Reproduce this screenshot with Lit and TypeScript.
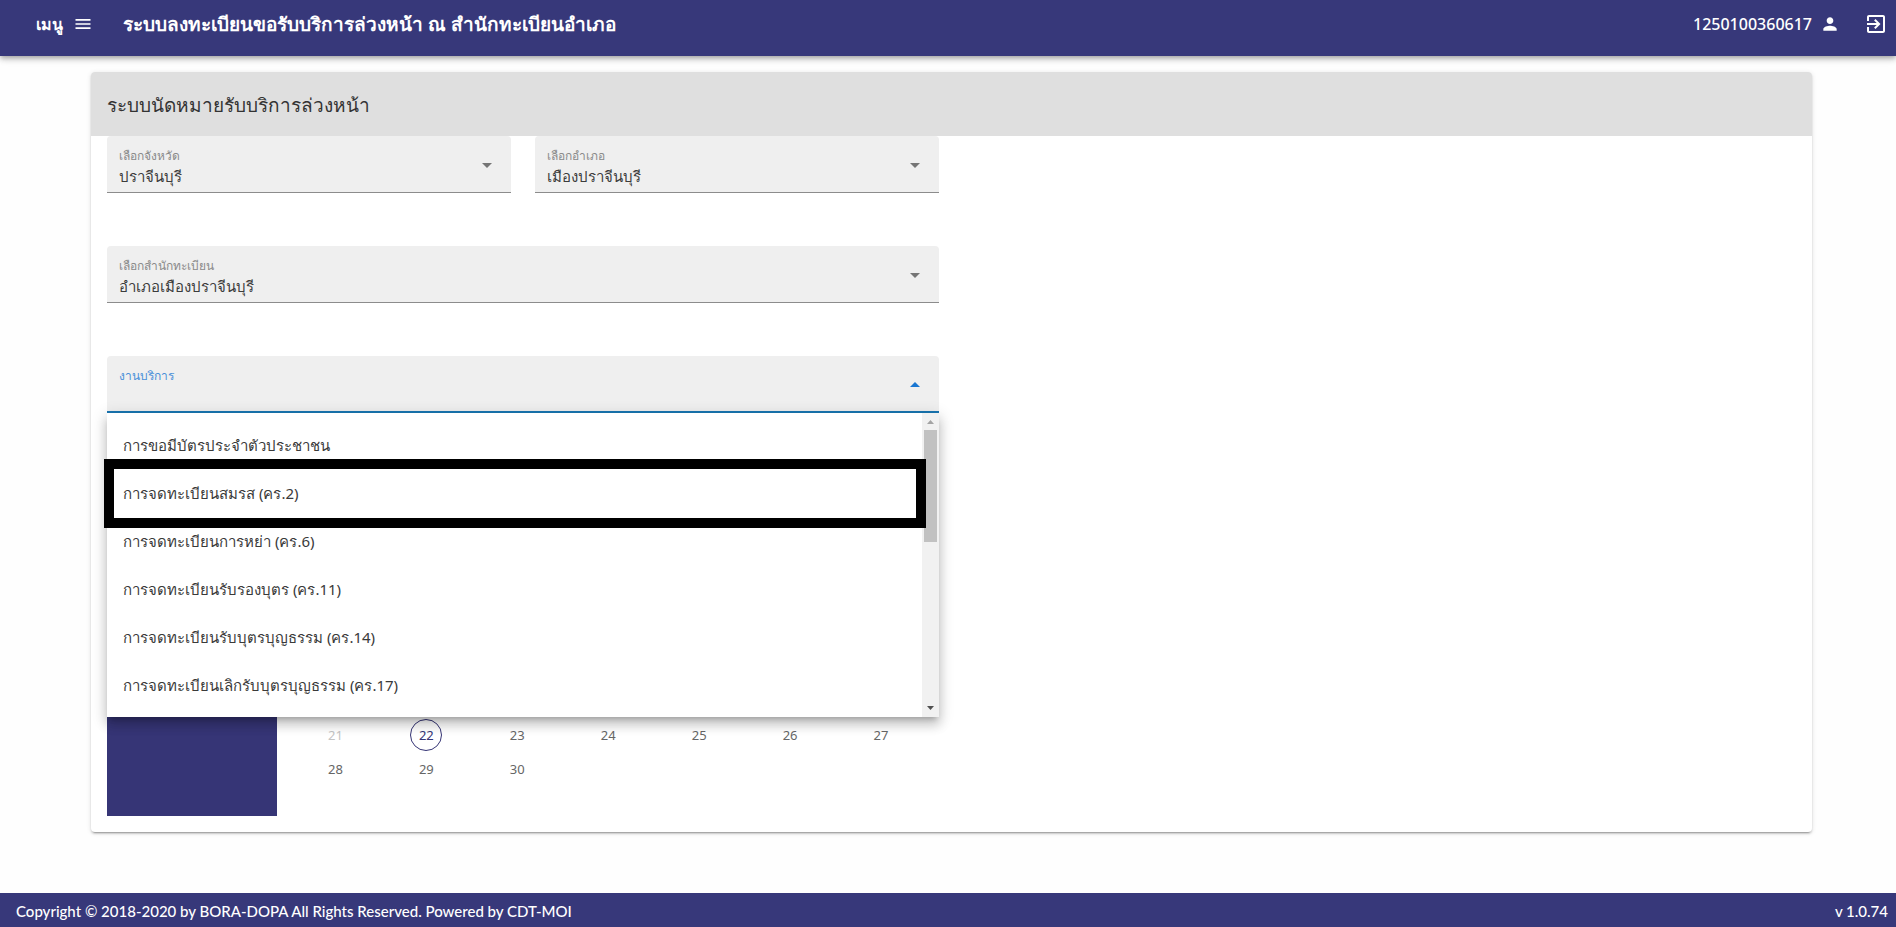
import { LitElement, html, css, svg, nothing } from "lit";
import { customElement, property, state } from "lit/decorators.js";

const SERVICES = [
  "การขอมีบัตรประจำตัวประชาชน",
  "การจดทะเบียนสมรส (คร.2)",
  "การจดทะเบียนการหย่า (คร.6)",
  "การจดทะเบียนรับรองบุตร (คร.11)",
  "การจดทะเบียนรับบุตรบุญธรรม (คร.14)",
  "การจดทะเบียนเลิกรับบุตรบุญธรรม (คร.17)",
];

const WEEKS = [
  [21, 22, 23, 24, 25, 26, 27],
  [28, 29, 30, 0, 0, 0, 0],
];
const TODAY = 22;

const FONT = css`"Noto Sans", "Open Sans", sans-serif`;

const icon = (d: string, size: number) => html`
  <svg width=${size} height=${size} viewBox="0 0 24 24" aria-hidden="true">
    ${svg`<path fill="currentColor" d=${d}></path>`}
  </svg>
`;

@customElement("select-field")
export class SelectField extends LitElement {
  @property() label = "";
  @property() value = "";
  @property({ type: Boolean, reflect: true }) open = false;

  static styles = css`
    :host {
      display: block;
      position: relative;
      font-family: ${FONT};
    }
    .box {
      display: grid;
      height: 57px;
      box-sizing: border-box;
      background: #efefef;
      border-radius: 4px 4px 0 0;
      border-bottom: 1px solid #8c8c8c;
      color: #757575;
    }
    .open {
      border-bottom: 2px solid #1976b2;
      color: #1976d2;
    }
    label,
    select,
    svg {
      grid-area: 1 / 1;
    }
    label {
      padding: 10px 12px 0;
      font-size: 12px;
      line-height: 20px;
      color: #8a8a8a;
      z-index: 1;
      pointer-events: none;
    }
    .open label {
      color: #4a90d9;
    }
    select {
      appearance: none;
      width: 100%;
      height: 100%;
      margin: 0;
      padding: 24px 48px 0 12px;
      border: 0;
      outline: 0;
      background: transparent;
      font: 400 15px/32px ${FONT};
      color: #3c3c3c;
    }
    svg {
      justify-self: end;
      align-self: center;
      margin: 2px 12px 0 0;
      pointer-events: none;
    }
    .open svg {
      transform: rotate(180deg);
    }
  `;

  render() {
    return html`
      <div class="box ${this.open ? "open" : ""}">
        <label for="control">${this.label}</label>
        <select id="control">
          <option>${this.value}</option>
        </select>
        ${icon("M7 10l5 5 5-5z", 24)}
      </div>
      <slot></slot>
    `;
  }
}

@customElement("service-menu")
export class ServiceMenu extends LitElement {
  static styles = css`
    :host {
      position: absolute;
      z-index: 2;
      top: 100%;
      left: 0;
      right: 0;
      display: flex;
      background: #fff;
      box-shadow: 0 5px 5px -3px rgba(0, 0, 0, 0.2), 0 8px 10px 1px rgba(0, 0, 0, 0.14),
        0 3px 14px 2px rgba(0, 0, 0, 0.12);
      font-family: ${FONT};
    }
    .list {
      flex: 1;
      padding: 8px 0;
    }
    .item {
      display: block;
      width: 100%;
      height: 48px;
      padding: 0 16px;
      border: 0;
      background: none;
      text-align: left;
      font: 400 15px/24px ${FONT};
      color: #3a3a3a;
    }
    .bar {
      display: flex;
      flex-direction: column;
      align-items: center;
      width: 17px;
      background: #f1f1f1;
    }
    .arrow {
      width: 17px;
      height: 17px;
      color: #a3a3a3;
    }
    .down {
      color: #505050;
      margin-top: auto;
    }
    .thumb {
      width: 13px;
      height: 112px;
      background: #c1c1c1;
    }
    .mark {
      position: absolute;
      top: 46px;
      left: -3px;
      right: 13px;
      height: 69px;
      box-sizing: border-box;
      border: 10px solid #000;
      pointer-events: none;
    }
  `;

  render() {
    return html`
      <div class="list" role="listbox" aria-label="งานบริการ">
        ${SERVICES.map((s) => html`<button class="item" role="option">${s}</button>`)}
      </div>
      <div class="bar">
        <svg class="arrow" viewBox="0 0 17 17"><path fill="currentColor" d="M5 11h7L8.500 7z" /></svg>
        <div class="thumb"></div>
        <svg class="arrow down" viewBox="0 0 17 17"><path fill="currentColor" d="M5 6h7L8.500 10z" /></svg>
      </div>
      <div class="mark"></div>
    `;
  }
}

@customElement("date-picker")
export class DatePicker extends LitElement {
  static styles = css`
    :host {
      display: flex;
      height: 350px;
      font-family: ${FONT};
    }
    .title {
      width: 170px;
      background: #363576;
    }
    .body {
      flex: 1;
      display: flex;
      align-items: flex-end;
      padding: 0 12px 30px 13px;
    }
    table {
      width: 100%;
      table-layout: fixed;
      border-collapse: collapse;
    }
    td {
      height: 34px;
      padding: 0;
      text-align: center;
    }
    .day {
      width: 32px;
      height: 32px;
      padding: 0;
      border: 0;
      border-radius: 50%;
      background: none;
      font: 400 13px/30px ${FONT};
      color: #666;
    }
    .day:disabled {
      color: #c4c4c4;
    }
    .today {
      border: 1px solid #363576;
      color: #363576;
    }
  `;

  render() {
    return html`
      <div class="title"></div>
      <div class="body">
        <table>
          <tbody>
            ${WEEKS.map(
              (week) => html`<tr>
                ${week.map(
                  (d) => html`<td>
                    ${d
                      ? html`<button class="day ${d === TODAY ? "today" : ""}" ?disabled=${d < TODAY}>${d}</button>`
                      : nothing}
                  </td>`
                )}
              </tr>`
            )}
          </tbody>
        </table>
      </div>
    `;
  }
}

@customElement("app-root")
export class AppRoot extends LitElement {
  @state() private menuOpen = true;

  static styles = css`
    :host {
      display: flex;
      flex-direction: column;
      min-height: 100vh;
      background: #fefefe;
      font-family: ${FONT};
      color: #333;
    }
    header {
      display: flex;
      align-items: center;
      height: 56px;
      box-sizing: border-box;
      padding: 0 8px 8px 36px;
      background: #37387a;
      color: #fff;
      box-shadow: 0 2px 4px -1px rgba(0, 0, 0, 0.2), 0 4px 5px rgba(0, 0, 0, 0.14),
        0 1px 10px rgba(0, 0, 0, 0.12);
    }
    header button {
      display: flex;
      align-items: center;
      padding: 0;
      border: 0;
      background: none;
      color: inherit;
      font: 600 16px/24px ${FONT};
    }
    .menu {
      gap: 10px;
    }
    h1 {
      flex: 1;
      margin: 0 0 0 30px;
      font-size: 19px;
      font-weight: 600;
      line-height: 32px;
    }
    header .user {
      gap: 8px;
      margin-right: 24px;
      font-weight: 500;
    }
    main {
      flex: 1;
      padding: 16px 84px 16px 91px;
    }
    .card {
      background: #fff;
      border-radius: 4px;
      box-shadow: 0 3px 1px -2px rgba(0, 0, 0, 0.2), 0 2px 2px rgba(0, 0, 0, 0.14),
        0 1px 5px rgba(0, 0, 0, 0.12);
    }
    h2 {
      margin: 0;
      padding: 17px 16px 15px;
      border-radius: 4px 4px 0 0;
      background: #dfdfdf;
      font-size: 19px;
      font-weight: 400;
      line-height: 32px;
    }
    .form {
      display: grid;
      grid-template-columns: 1fr 1fr;
      gap: 53px 24px;
      width: 50%;
      box-sizing: border-box;
      padding: 0 13px 16px 16px;
    }
    .wide {
      grid-column: 1 / -1;
    }
    footer {
      display: flex;
      justify-content: space-between;
      padding: 6px 8px 4px 16px;
      background: #37387a;
      color: #fff;
      font-family: Lato, ${FONT};
      font-size: 15px;
      font-weight: 500;
      line-height: 24px;
    }
  `;

  render() {
    return html`
      <header>
        <button class="menu">เมนู ${icon("M3 18h18v-2H3v2zm0-5h18v-2H3v2zm0-7v2h18V6H3z", 20)}</button>
        <h1>ระบบลงทะเบียนขอรับบริการล่วงหน้า ณ สำนักทะเบียนอำเภอ</h1>
        <button class="user">
          1250100360617
          ${icon("M12 12c2.210 0 4-1.790 4-4s-1.790-4-4-4-4 1.790-4 4 1.790 4 4 4zm0 2c-2.670 0-8 1.340-8 4v2h16v-2c0-2.660-5.330-4-8-4z", 20)}
        </button>
        <button aria-label="ออกจากระบบ">
          ${icon("M10.090 15.590L11.500 17l5-5-5-5-1.410 1.410L12.670 11H3v2h9.670l-2.580 2.590zM19 3H5c-1.110 0-2 .9-2 2v4h2V5h14v14H5v-4H3v4c0 1.100.89 2 2 2h14c1.100 0 2-.9 2-2V5c0-1.100-.9-2-2-2z", 24)}
        </button>
      </header>
      <main>
        <section class="card">
          <h2>ระบบนัดหมายรับบริการล่วงหน้า</h2>
          <div class="form">
            <select-field label="เลือกจังหวัด" value="ปราจีนบุรี"></select-field>
            <select-field label="เลือกอำเภอ" value="เมืองปราจีนบุรี"></select-field>
            <select-field class="wide" label="เลือกสำนักทะเบียน" value="อำเภอเมืองปราจีนบุรี"></select-field>
            <select-field class="wide" label="งานบริการ" ?open=${this.menuOpen}>
              ${this.menuOpen ? html`<service-menu></service-menu>` : nothing}
            </select-field>
            <date-picker class="wide"></date-picker>
          </div>
        </section>
      </main>
      <footer>
        <span>Copyright © 2018-2020 by BORA-DOPA All Rights Reserved. Powered by CDT-MOI</span>
        <span>v 1.0.74</span>
      </footer>
    `;
  }
}
